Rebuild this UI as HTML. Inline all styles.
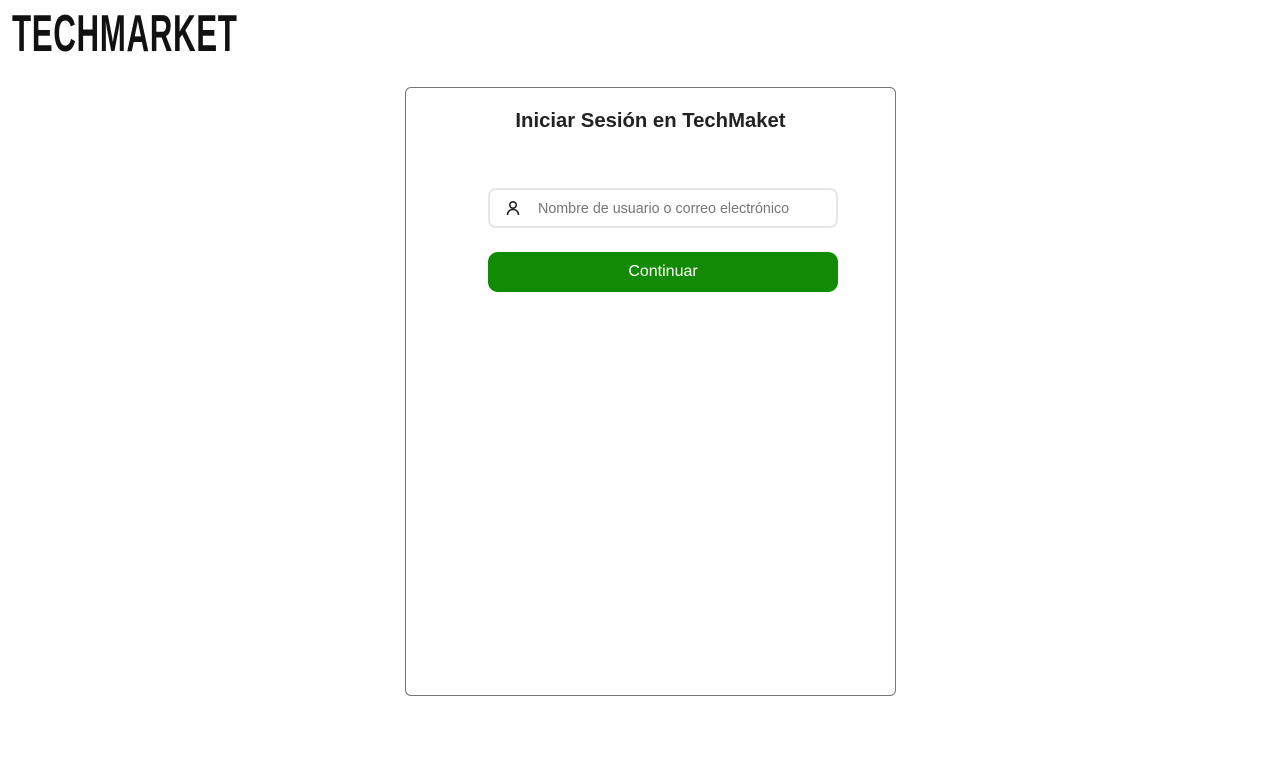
<!DOCTYPE html>
<html><head><meta charset="utf-8"><style>
body{margin:0;width:1275px;height:781px;background:#fff;font-family:"Liberation Sans",sans-serif;position:relative;overflow:hidden}
.logo{position:absolute;left:12px;top:5px;font-size:52px;font-weight:bold;color:#111;transform:scaleX(0.603);transform-origin:left top;letter-spacing:1px;line-height:58px}
.card{position:absolute;left:405px;top:87px;width:491px;height:609px;border:1px solid #777;border-radius:6px;box-sizing:border-box}
h1{position:absolute;left:405px;width:491px;top:110px;margin:0;text-align:center;font-size:20.3px;color:#222;font-weight:bold;line-height:22px}
.inp{position:absolute;left:488px;top:188px;width:350px;height:40px;box-sizing:border-box;border:2px solid #e6e6e6;border-radius:8px}
.inp span{position:absolute;left:48px;top:11px;font-size:14.3px;color:#777}
.inp svg{position:absolute;left:16px;top:10px}
.btn{position:absolute;left:488px;top:252px;width:350px;height:40px;background:#128a04;border-radius:10px;color:#fff;font-size:16px;text-align:center;line-height:40px}
</style></head><body>
<div class="logo">TECHMARKET</div>
<div class="card"></div>
<h1>Iniciar Sesión en TechMaket</h1>
<div class="inp"><svg width="14" height="16" viewBox="0 0 14 16" fill="none" stroke="#222" stroke-width="1.6"><circle cx="7" cy="5" r="3.2"/><path d="M1.5 15c0-3.5 2.5-5.5 5.5-5.5s5.5 2 5.5 5.5"/></svg><span>Nombre de usuario o correo electrónico</span></div>
<div class="btn">Continuar</div>
</body></html>
